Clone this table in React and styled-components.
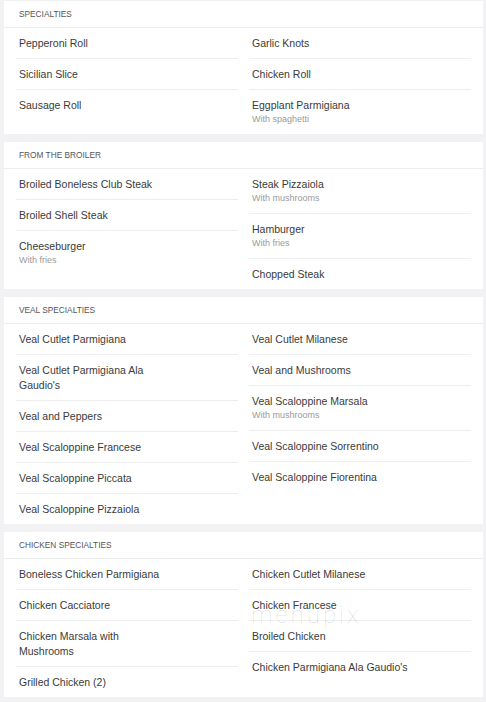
import React from 'react';
import styled, { createGlobalStyle } from 'styled-components';

const GlobalStyle = createGlobalStyle`
  html, body {
    margin: 0;
    padding: 0;
    background: #f2f2f4;
  }
  body {
    font-family: "Liberation Sans", Arial, sans-serif;
    color: #333;
  }
`;

const Page = styled.div`
  position: relative;
  display: flex;
  flex-direction: column;
  gap: 8px;
  padding: 1px 3px 0 4px;
`;

const Card = styled.section`
  background: #fff;
`;

const CardHeader = styled.div`
  padding: 7px 15px;
  font-size: 8.3px;
  line-height: 12px;
  text-transform: uppercase;
  color: #555;
  border-bottom: 1px solid #ececec;
`;

const Columns = styled.div`
  display: grid;
  grid-template-columns: 1fr 1fr;
  column-gap: 11px;
  align-items: start;
  padding: 0 12px;
`;

const List = styled.ul`
  list-style: none;
  margin: 0;
  padding: 0;
`;

const Row = styled.li`
  padding: 8px 3px 7px;
  border-bottom: 1px solid #eeeeee;
  &:last-child {
    border-bottom: 0;
  }
`;

const Name = styled.div`
  max-width: 157px;
  font-size: 10.5px;
  line-height: 15px;
  color: #3a3a3a;
`;

const Note = styled.div`
  font-size: 9px;
  line-height: 13px;
  padding-bottom: 1px;
  color: #9a9a9a;
`;

const Watermark = styled.div`
  position: absolute;
  left: 251px;
  top: 603px;
  font-family: Roboto, "Liberation Sans", sans-serif;
  font-weight: 100;
  font-size: 24px;
  line-height: 24px;
  letter-spacing: 3px;
  color: rgba(0, 0, 0, 0.16);
  pointer-events: none;
`;

const menu = [
  {
    title: 'Specialties',
    left: [
      { name: 'Pepperoni Roll' },
      { name: 'Sicilian Slice' },
      { name: 'Sausage Roll' },
    ],
    right: [
      { name: 'Garlic Knots' },
      { name: 'Chicken Roll' },
      { name: 'Eggplant Parmigiana', note: 'With spaghetti' },
    ],
  },
  {
    title: 'From the Broiler',
    left: [
      { name: 'Broiled Boneless Club Steak' },
      { name: 'Broiled Shell Steak' },
      { name: 'Cheeseburger', note: 'With fries' },
    ],
    right: [
      { name: 'Steak Pizzaiola', note: 'With mushrooms' },
      { name: 'Hamburger', note: 'With fries' },
      { name: 'Chopped Steak' },
    ],
  },
  {
    title: 'Veal Specialties',
    left: [
      { name: 'Veal Cutlet Parmigiana' },
      { name: "Veal Cutlet Parmigiana Ala Gaudio's" },
      { name: 'Veal and Peppers' },
      { name: 'Veal Scaloppine Francese' },
      { name: 'Veal Scaloppine Piccata' },
      { name: 'Veal Scaloppine Pizzaiola' },
    ],
    right: [
      { name: 'Veal Cutlet Milanese' },
      { name: 'Veal and Mushrooms' },
      { name: 'Veal Scaloppine Marsala', note: 'With mushrooms' },
      { name: 'Veal Scaloppine Sorrentino' },
      { name: 'Veal Scaloppine Fiorentina' },
    ],
  },
  {
    title: 'Chicken Specialties',
    left: [
      { name: 'Boneless Chicken Parmigiana' },
      { name: 'Chicken Cacciatore' },
      { name: 'Chicken Marsala with Mushrooms' },
      { name: 'Grilled Chicken (2)' },
    ],
    right: [
      { name: 'Chicken Cutlet Milanese' },
      { name: 'Chicken Francese' },
      { name: 'Broiled Chicken' },
      { name: "Chicken Parmigiana Ala Gaudio's" },
    ],
  },
];

function ItemList({ items }) {
  return (
    <List>
      {items.map((item) => (
        <Row key={item.name}>
          <Name>{item.name}</Name>
          {item.note && <Note>{item.note}</Note>}
        </Row>
      ))}
    </List>
  );
}

export default function App() {
  return (
    <>
      <GlobalStyle />
      <Page>
        {menu.map((section) => (
          <Card key={section.title}>
            <CardHeader>{section.title}</CardHeader>
            <Columns>
              <ItemList items={section.left} />
              <ItemList items={section.right} />
            </Columns>
          </Card>
        ))}
        <Watermark>menupix</Watermark>
      </Page>
    </>
  );
}
